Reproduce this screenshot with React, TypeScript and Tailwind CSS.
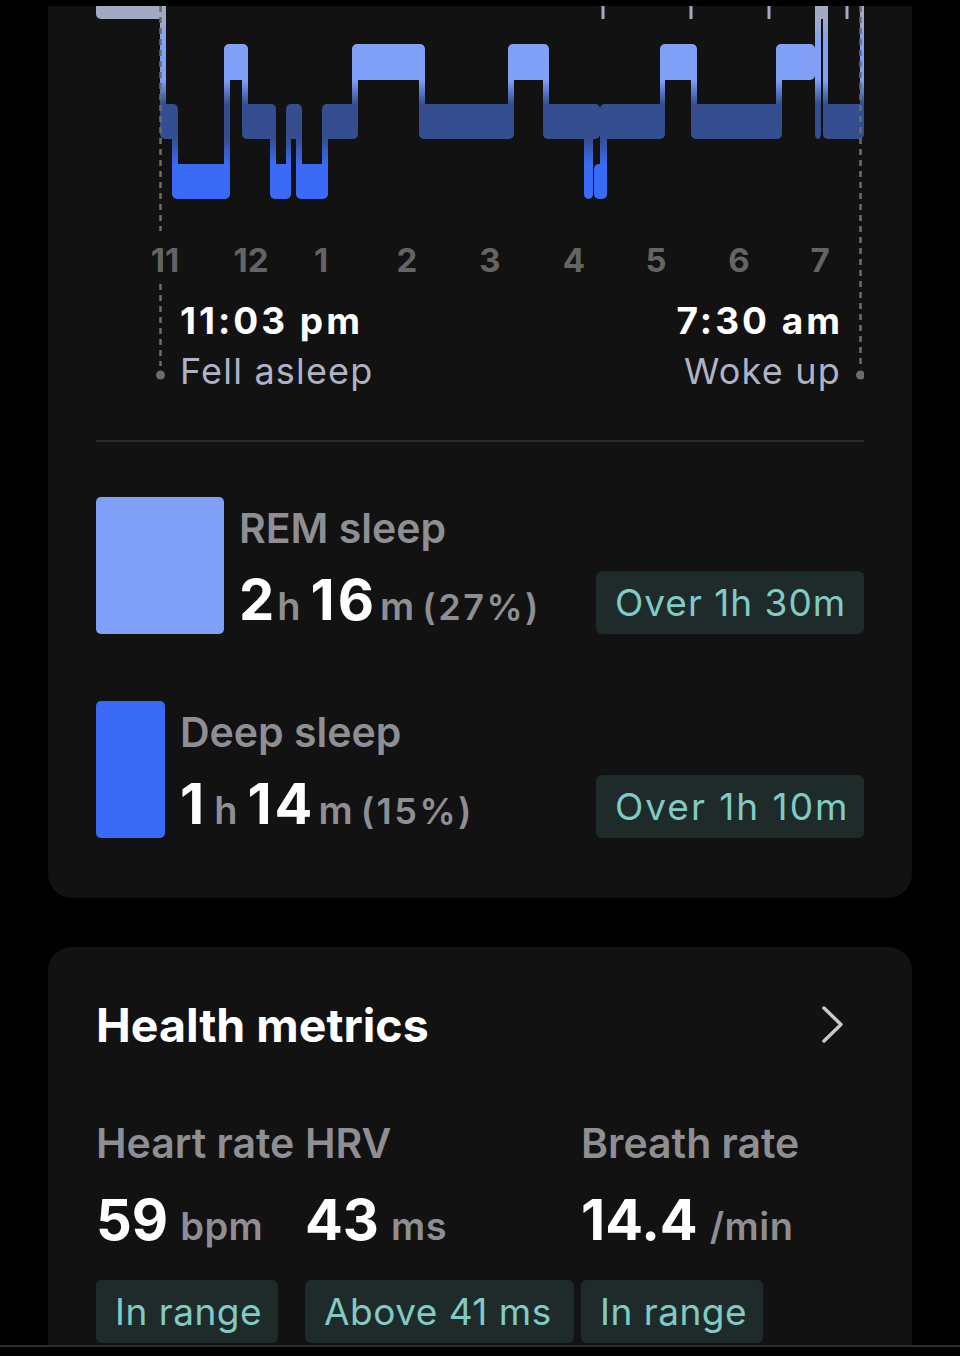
import React from "react";

type Stage = "awake" | "rem" | "light" | "deep";
const BAND: Record<Stage, [number, number]> = {
  awake: [-10, 19],
  rem: [44, 80],
  light: [104, 139],
  deep: [164, 199],
};

const SEGS: [number, number, Stage][] = [
  [96, 166, "awake"],
  [160, 178, "light"],
  [172, 230, "deep"],
  [224, 248, "rem"],
  [242, 276, "light"],
  [270, 291, "deep"],
  [286, 302, "light"],
  [296, 328, "deep"],
  [322, 358, "light"],
  [352, 425, "rem"],
  [419, 514, "light"],
  [508, 549, "rem"],
  [543, 600, "light"],
  [584, 593, "deep"],
  [594, 607, "deep"],
  [600, 665, "light"],
  [660, 697, "rem"],
  [691, 782, "light"],
  [776, 815, "rem"],
  [815, 821, "light"],
  [815, 828, "awake"],
  [823, 864, "light"],
  [860, 864, "awake"],
];

function Chart() {
  const connectors: { x: number; w: number; y: number; h: number }[] = [];
  for (let i = 1; i < SEGS.length; i++) {
    const a = SEGS[i - 1];
    const b = SEGS[i];
    if (a[2] === b[2]) continue;
    const ox1 = Math.max(a[0], b[0]);
    const ox2 = Math.min(a[1], b[1]);
    if (ox2 <= ox1) continue;
    const top = Math.min(BAND[a[2]][0], BAND[b[2]][0]);
    const bot = Math.max(BAND[a[2]][1], BAND[b[2]][1]);
    connectors.push({ x: ox1, w: ox2 - ox1, y: top + 8, h: bot - top - 16 });
  }
  return (
    <svg
      className="absolute left-0 top-0 pointer-events-none"
      width={768}
      height={390}
      viewBox="96 6 768 390"
    >
      <defs>
        <linearGradient id="stg" gradientUnits="userSpaceOnUse" x1="0" y1="6" x2="0" y2="199">
          <stop offset="0" stopColor="#a2aac3" />
          <stop offset="0.067" stopColor="#a2aac3" />
          <stop offset="0.197" stopColor="#80a0f8" />
          <stop offset="0.383" stopColor="#80a0f8" />
          <stop offset="0.508" stopColor="#344e90" />
          <stop offset="0.689" stopColor="#344e90" />
          <stop offset="0.819" stopColor="#3a6af6" />
          <stop offset="1" stopColor="#3a6af6" />
        </linearGradient>
      </defs>
      {[603, 691, 769, 847].map((x) => (
        <rect key={x} x={x - 1.5} y={0} width={3} height={19} fill="#a2aac3" />
      ))}
      {SEGS.map(([x1, x2, s], i) => (
        <rect
          key={"s" + i}
          x={x1}
          y={BAND[s][0]}
          width={x2 - x1}
          height={BAND[s][1] - BAND[s][0]}
          rx={5}
          fill="url(#stg)"
        />
      ))}
      {connectors.map((c, i) => (
        <rect key={"c" + i} x={c.x} y={c.y} width={c.w} height={c.h} fill="url(#stg)" />
      ))}
      <line x1={160.5} y1={6} x2={160.5} y2={231} stroke="#6c6c6c" strokeWidth={2.5} strokeDasharray="6 5" />
      <line x1={160.5} y1={284} x2={160.5} y2={366} stroke="#6c6c6c" strokeWidth={2.5} strokeDasharray="6 5" />
      <circle cx={160.5} cy={375} r={4.5} fill="#6c6c6c" />
      <line x1={860.5} y1={6} x2={860.5} y2={366} stroke="#6c6c6c" strokeWidth={2.5} strokeDasharray="6 5" />
      <circle cx={860.5} cy={375} r={4.5} fill="#6c6c6c" />
    </svg>
  );
}

const HOURS: [string, number][] = [
  ["11", 69],
  ["12", 155],
  ["1", 225],
  ["2", 311],
  ["3", 394],
  ["4", 478],
  ["5", 560],
  ["6", 643],
  ["7", 724],
];

function Badge({ children, w, tr }: { children: React.ReactNode; w: string; tr: string }) {
  return (
    <div
      className={`h-[63px] px-[19px] rounded-[6px] bg-[#1f2b2b] text-[#80cbc4] text-[37px] leading-[63px] whitespace-nowrap ${tr} ${w}`}
    >
      {children}
    </div>
  );
}

function StageRow({
  color,
  sqW,
  label,
  h,
  m,
  pct,
  badge,
  hGap,
  btr,
}: {
  color: string;
  sqW: string;
  label: string;
  h: string;
  m: string;
  pct: string;
  badge: string;
  hGap: string;
  btr: string;
}) {
  return (
    <div className="flex h-[137px] items-end justify-between">
      <div className="flex h-full gap-[15px]">
        <div className={`h-[137px] rounded-[5px] ${sqW} ${color}`} />
        <div className="flex flex-col">
          <div className="mt-[7px] h-[48px] text-[41px] leading-[48px] font-semibold text-[#8e8e93]">{label}</div>
          <div className="mt-[16px] flex h-[64px] items-baseline leading-[64px] whitespace-nowrap">
            <span className="text-[56px] font-bold tracking-[3px] text-white">{h}</span>
            <span className={`text-[38px] font-semibold text-[#8e8e93] ${hGap}`}>h</span>
            <span className="ml-[10px] text-[56px] font-bold tracking-[3px] text-white">{m}</span>
            <span className="ml-[3px] text-[38px] font-semibold text-[#8e8e93]">m</span>
            <span className="ml-[8px] text-[36px] font-semibold tracking-[2.5px] text-[#8e8e93]">{pct}</span>
          </div>
        </div>
      </div>
      <Badge w="w-[268px]" tr={btr}>
        {badge}
      </Badge>
    </div>
  );
}

function Metric({
  w,
  bw,
  label,
  value,
  unit,
  badge,
}: {
  w: string;
  bw: string;
  label: string;
  value: string;
  unit: string;
  badge: string;
}) {
  return (
    <div className={`flex flex-col items-start ${w}`}>
      <div className="h-[48px] text-[41px] leading-[48px] font-semibold text-[#8e8e93] whitespace-nowrap">{label}</div>
      <div className="mt-[21px] flex h-[64px] items-baseline leading-[64px] whitespace-nowrap">
        <span className="text-[56px] font-bold text-white">{value}</span>
        <span className="ml-[12px] text-[38px] font-semibold tracking-[0.5px] text-[#8e8e93]">{unit}</span>
      </div>
      <div className="mt-[28px]">
        <Badge w={bw} tr="tracking-[0.5px]">
          {badge}
        </Badge>
      </div>
    </div>
  );
}

export default function App() {
  return (
    <div className="relative h-[1356px] overflow-hidden bg-black pt-[6px] font-['Inter','Noto_Sans',sans-serif]">
      {/* Sleep card */}
      <div className="mx-12 rounded-b-[24px] bg-[#121212] px-12 pb-[60px]">
        <div className="relative">
          <Chart />
          <div className="h-[234px]" />
          <div className="relative h-[56px]">
            {HOURS.map(([t, x]) => (
              <span
                key={t}
                className="absolute top-0 -translate-x-1/2 text-[33px] leading-[40px] font-bold text-[#646464]"
                style={{ left: x }}
              >
                {t}
              </span>
            ))}
          </div>
          <div className="relative flex justify-between pl-[84px] pr-[24px]">
            <div className="flex flex-col items-start">
              <span className="text-[37px] leading-[50px] font-bold tracking-[3px] text-white">11:03 pm</span>
              <span className="text-[36px] leading-[50px] tracking-[1.2px] text-[#b0b3c6]">Fell asleep</span>
            </div>
            <div className="flex flex-col items-end">
              <span className="-mr-[3px] text-[37px] leading-[50px] font-bold tracking-[3px] text-white">7:30 am</span>
              <span className="-mr-[1px] text-[36px] leading-[50px] tracking-[1.2px] text-[#b0b3c6]">Woke up</span>
            </div>
          </div>
        </div>
        <div className="mt-[44px] h-[2px] bg-[#2a2a2a]" />
        <div className="mt-[55px] flex flex-col gap-[67px]">
          <StageRow
            color="bg-[#80a0f8]"
            sqW="w-[128px]"
            label="REM sleep"
            h="2"
            m="16"
            pct="(27%)"
            badge="Over 1h 30m"
            hGap="ml-0"
            btr="tracking-[1px]"
          />
          <StageRow
            color="bg-[#3a6af6]"
            sqW="w-[69px]"
            label="Deep sleep"
            h="1"
            m="14"
            pct="(15%)"
            badge="Over 1h 10m"
            hGap="ml-[7px]"
            btr="tracking-[2px]"
          />
        </div>
      </div>

      {/* Health metrics card */}
      <div className="mx-12 mt-[49px] h-[600px] rounded-t-[24px] bg-[#121212] px-12 pt-[50px]">
        <div className="flex items-center justify-between">
          <div className="text-[46.5px] leading-[56px] font-bold text-white">Health metrics</div>
          <svg width="24" height="40" viewBox="0 0 24 40" className="mr-[19px]">
            <polyline
              points="3,3 20,19.5 3,36"
              fill="none"
              stroke="#c7c7cc"
              strokeWidth="3.5"
              strokeLinecap="round"
              strokeLinejoin="round"
            />
          </svg>
        </div>
        <div className="mt-[66px] flex">
          <Metric w="w-[209px]" bw="w-[182px]" label="Heart rate" value="59" unit="bpm" badge="In range" />
          <Metric w="w-[276px]" bw="w-[269px]" label="HRV" value="43" unit="ms" badge="Above 41 ms" />
          <Metric w="flex-1" bw="w-[182px]" label="Breath rate" value="14.4" unit="/min" badge="In range" />
        </div>
      </div>

      {/* Tab bar edge */}
      <div className="absolute bottom-0 left-0 right-0 h-[11px] border-t-2 border-[#2c2c2e] bg-black" />
    </div>
  );
}
